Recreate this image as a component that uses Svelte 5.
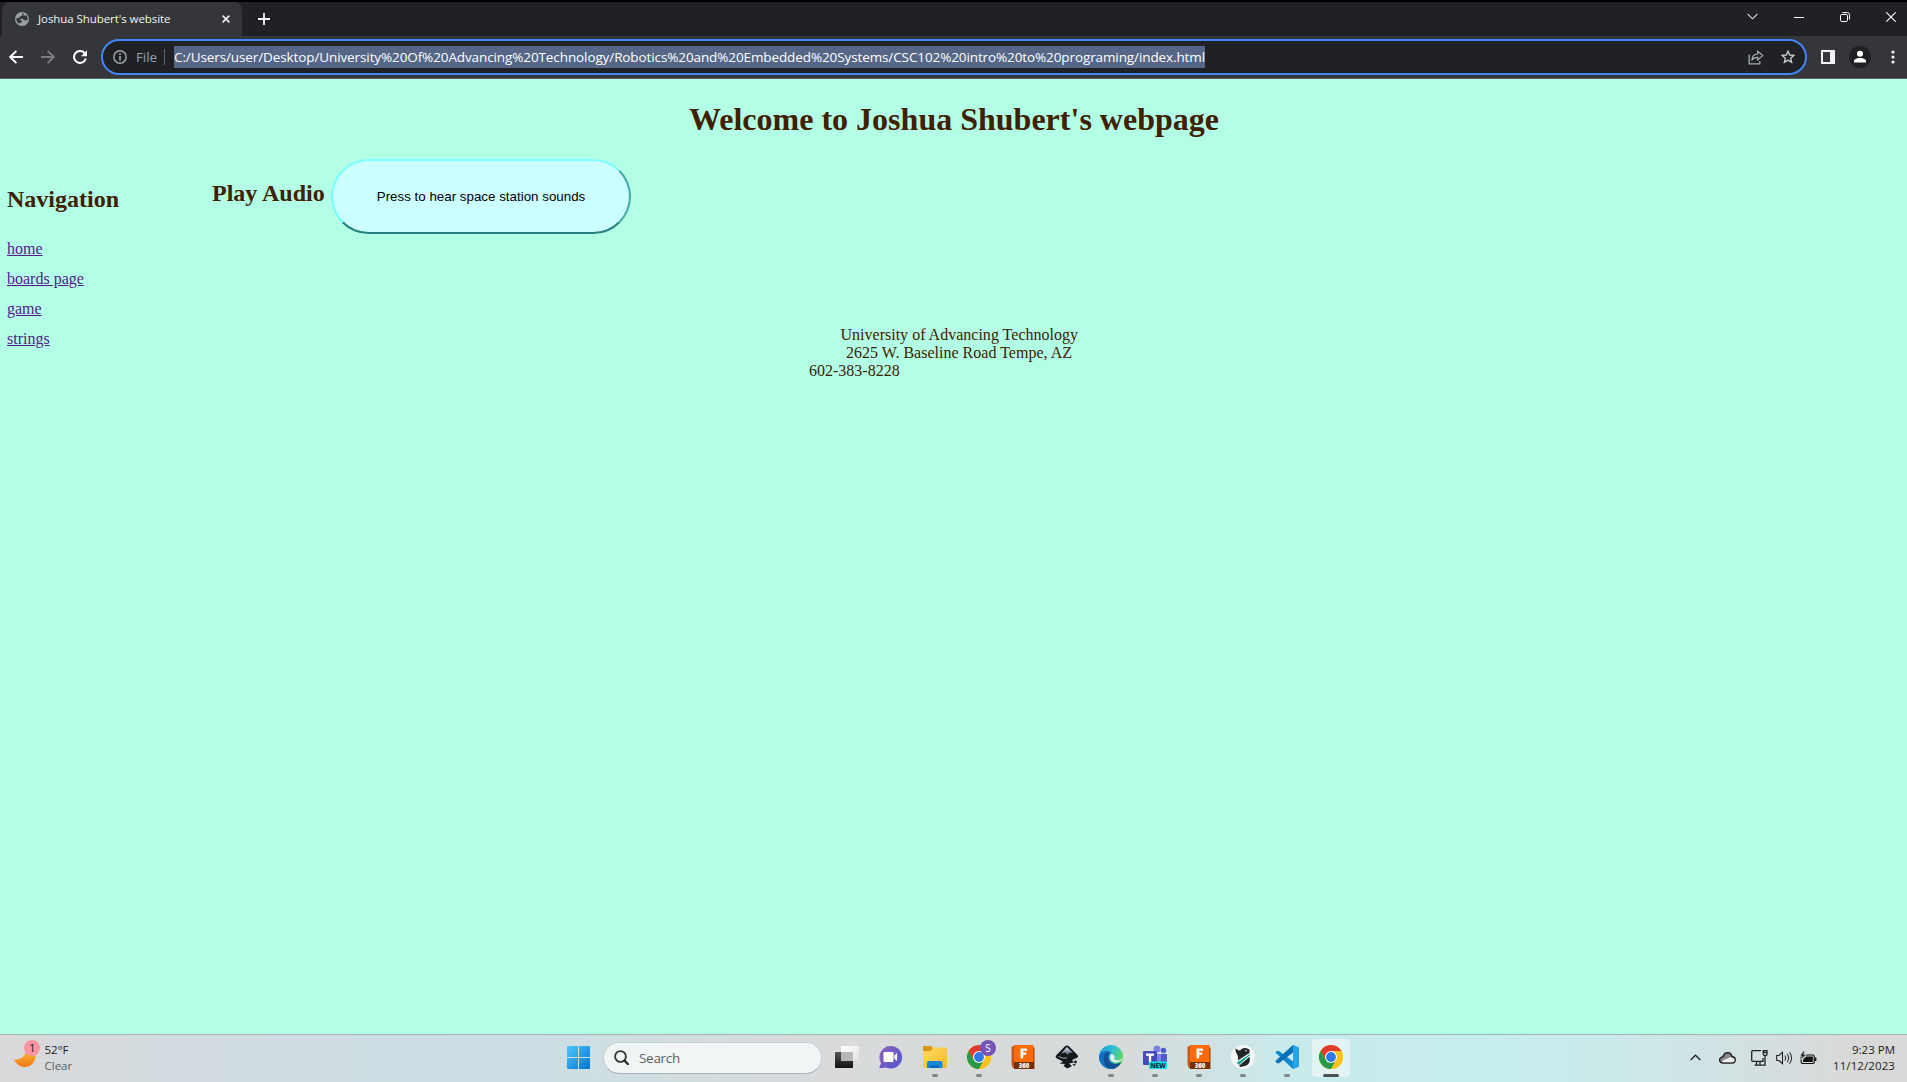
<script>
  const url =
    'C:/Users/user/Desktop/University%20Of%20Advancing%20Technology/Robotics%20and%20Embedded%20Systems/CSC102%20intro%20to%20programing/index.html';
  const links = ['home', 'boards page', 'game', 'strings'];
  const apps = [
    { id: 'view' },
    { id: 'chat' },
    { id: 'files', open: true },
    { id: 'chrome', open: true, badge: 'S' },
    { id: 'fusion' },
    { id: 'inkscape' },
    { id: 'edge', open: true },
    { id: 'teams', open: true },
    { id: 'fusion', open: true },
    { id: 'orca', open: true },
    { id: 'code', open: true },
    { id: 'chrome', open: true, active: true }
  ];

  // Spreads the tracking of a label so that it fills the given width.
  function fit(node, width) {
    const natural = node.getBoundingClientRect().width;
    node.style.letterSpacing = (width - natural) / node.textContent.length + 'px';
  }
</script>

{#snippet chromeLogo()}
  <circle cx="22" cy="23" r="12" fill="#fbc116" />
  <path d="M11.6 17A12 12 0 0 1 32.4 17H22L16.8 26Z" fill="#e33b2e" />
  <path d="M11.6 17A12 12 0 0 0 22 35L27.2 26H16.8Z" fill="#279847" />
  <path d="M22 35A12 12 0 0 0 32.4 17H22L27.2 26Z" fill="#fcc31a" />
  <circle cx="22" cy="23" r="6" fill="#fff" />
  <circle cx="22" cy="23" r="4.9" fill="#2f78e8" />
{/snippet}

<div class="screen">
  <header class="tabs">
    <div class="tab">
      <svg class="globe" width="14" height="14" viewBox="0 0 14 14">
        <circle cx="7" cy="7" r="7" fill="#9aa0a6" />
        <path d="M8.5 1.3C7 1 6.7 2 7.2 2.8 7.6 3.6 6.4 4.2 5.6 4.1 5 4.2 5.2 5.4 4.6 5.6L1.3 6.2C1.1 8.8 2.5 11 4.3 12L4.6 10.6 6.6 10.4C7.6 10 7.2 8.6 6.2 8.3L4.8 7.4 6.6 6.6C8 6.4 8.6 7.4 8.8 8 10 8.6 11 8 12.6 8.2 13 6.2 12.3 4 10.8 2.7L9.8 3.9 8.4 3.4Z" fill="#35363a" />
      </svg>
      <span class="title"><span use:fit={132.5}>Joshua Shubert's website</span></span>
      <svg class="close" width="8" height="8" viewBox="0 0 8 8"><path d="M.6.6 7.4 7.4M7.4.6.6 7.4" stroke="#f1f3f4" stroke-width="1.5" /></svg>
    </div>
    <svg class="plus" width="12" height="12" viewBox="0 0 12 12"><path d="M6 0V12M0 6H12" stroke="#f1f3f4" stroke-width="1.8" /></svg>
    <div class="controls">
      <svg width="11" height="7" viewBox="0 0 11 7"><path d="M.5.8 5.5 5.8 10.5.8" fill="none" stroke="#dfe1e5" stroke-width="1.1" /></svg>
      <svg width="10" height="10" viewBox="0 0 10 10"><path d="M0 5.5H10" stroke="#fff" /></svg>
      <svg width="10" height="10" viewBox="0 0 10 10"><rect x=".5" y="2.5" width="7" height="7" rx="1.3" fill="none" stroke="#fff" /><path d="M2.3.6H7.4Q9.5.6 9.5 2.7V7.5" fill="none" stroke="#fff" /></svg>
      <svg width="10" height="10" viewBox="0 0 10 10"><path d="M.3.3 9.7 9.7M9.7.3.3 9.7" stroke="#fff" stroke-width="1.1" /></svg>
    </div>
  </header>

  <div class="toolbar">
    <svg class="back" width="14" height="14" viewBox="0 0 14 14"><path d="M14 7H1.5M7.4.8 1.2 7 7.4 13.2" fill="none" stroke="#fff" stroke-width="1.9" /></svg>
    <svg class="fwd" width="14" height="14" viewBox="0 0 14 14"><path d="M0 7H12.5M6.6.8 12.8 7 6.6 13.2" fill="none" stroke="#7c7d80" stroke-width="1.9" /></svg>
    <svg class="reload" width="14" height="14" viewBox="0 0 14 14"><path d="M11.8 3.3A6 6 0 1 0 12.8 8.5" fill="none" stroke="#fff" stroke-width="2" /><path d="M14 .2V6.2H8Z" fill="#fff" /></svg>
    <div class="omnibox">
      <svg class="info" width="14" height="14" viewBox="0 0 14 14"><circle cx="7" cy="7" r="6.2" fill="none" stroke="#9aa0a6" stroke-width="1.5" /><path d="M7 6V10.6M7 3.3V4.9" stroke="#9aa0a6" stroke-width="1.7" /></svg>
      <span class="scheme"><span use:fit={21}>File</span></span>
      <i class="rule"></i>
      <span class="url"><span use:fit={1031}>{url}</span></span>
      <svg class="share" width="16" height="15" viewBox="0 0 16 15"><path d="M1.2 4.5V13.8H11.8V11" fill="none" stroke="#a8acb1" stroke-width="1.3" /><path d="M9.7 1.2 14.8 5.6 9.7 10V7.4C7 7.3 5.1 8.1 3.7 10.2 4.1 6.5 6 4.2 9.7 3.8Z" fill="none" stroke="#a8acb1" stroke-width="1.2" /></svg>
      <svg class="star" width="14" height="14" viewBox="0 0 14 14"><path d="M7 1.2 8.7 5 12.9 5.4 9.7 8.2 10.6 12.3 7 10.1 3.4 12.3 4.3 8.2 1.1 5.4 5.3 5Z" fill="none" stroke="#c6c9cd" stroke-width="1.4" /></svg>
    </div>
    <svg class="panel" width="14" height="14" viewBox="0 0 14 14"><path fill="#f1f3f4" fill-rule="evenodd" d="M0 0H14V14H0ZM2 2V12H9V2Z" /></svg>
    <svg class="profile" width="22" height="22" viewBox="0 0 22 22"><circle cx="11" cy="11" r="11" fill="#202124" /><circle cx="11" cy="7.8" r="3" fill="#fff" /><path d="M5 16.5V15.3C5 13 8 12 11 12S17 13 17 15.3V16.5Z" fill="#fff" /></svg>
    <svg class="menu" width="4" height="14" viewBox="0 0 4 14"><g fill="#f1f3f4"><circle cx="2" cy="2" r="1.6" /><circle cx="2" cy="7" r="1.6" /><circle cx="2" cy="12" r="1.6" /></g></svg>
  </div>

  <main>
    <h1><span use:fit={530}>Welcome to Joshua Shubert's webpage</span></h1>
    <div class="content">
      <nav>
        <h2>Navigation</h2>
        {#each links as link}
          <a href="#{link}">{link}</a>
        {/each}
      </nav>
      <section>
        <h2 class="play">Play Audio</h2>
        <button><span use:fit={208.5}>Press to hear space station sounds</span></button>
      </section>
    </div>
    <footer>
      <span class="school"><span use:fit={237.5}>University of Advancing Technology</span></span>
      <span class="street"><span use:fit={226}>2625 W. Baseline Road Tempe, AZ</span></span>
      <span class="phone">602-383-8228</span>
    </footer>
  </main>

  <div class="taskbar">
    <div class="weather">
      <svg width="28" height="32" viewBox="0 0 28 32">
        <defs><linearGradient id="moon" x1="0" y1="0" x2="0" y2="1"><stop offset="0" stop-color="#f9c440" /><stop offset="1" stop-color="#ee7a14" /></linearGradient></defs>
        <path d="M1 20.3C7 21.5 13.5 17.5 13.6 8.5 20 9.5 23 14 22.5 19A11 10.5 0 0 1 1 20.3Z" fill="url(#moon)" />
        <circle cx="19" cy="9" r="8" fill="#fd949f" />
        <text x="19.3" y="13" text-anchor="middle" font-size="11.5" fill="#202020">1</text>
      </svg>
      <div><b>52°F</b><span>Clear</span></div>
    </div>

    <svg class="cell" width="44" height="47" viewBox="0 0 44 47">
      <defs><linearGradient id="win" x1="0" y1="0" x2="1" y2="1"><stop offset="0" stop-color="#4cc8fb" /><stop offset="1" stop-color="#0672d0" /></linearGradient></defs>
      <path d="M12 12Q11 12 11 13V23H22V12ZM23 12V23H34V13Q34 12 33 12ZM11 24V34Q11 35 12 35H22V24ZM23 24V35H33Q34 35 34 34V24Z" fill="url(#win)" />
    </svg>

    <div class="search">
      <svg width="15" height="15" viewBox="0 0 15 15"><circle cx="6.5" cy="6.5" r="5.4" fill="none" stroke="#333" stroke-width="1.8" /><path d="M10.5 10.5 14 14.2" stroke="#222" stroke-width="2.1" stroke-linecap="round" /></svg>
      <span use:fit={41}>Search</span>
    </div>

    {#each apps as app}
      <div class="app" class:active={app.active}>
        <svg width="44" height="47" viewBox="0 0 44 47">
          {#if app.id === 'view'}
            <defs><linearGradient id="dark" x1="0" y1="0" x2="0" y2="1"><stop offset="0" stop-color="#555" /><stop offset="1" stop-color="#111" /></linearGradient><linearGradient id="light" x1="0" y1="0" x2="1" y2="1"><stop offset="0" stop-color="#fff" /><stop offset="1" stop-color="#e2e2e2" /></linearGradient></defs>
            <rect x="10" y="18" width="18" height="16" rx="1" fill="url(#dark)" />
            <rect x="16" y="12" width="18" height="15" rx="1" fill="url(#light)" />
            <path d="M16 18H28V27H16Z" fill="#b8b8b8" />
          {:else if app.id === 'chat'}
            <defs><linearGradient id="chat" x1="0" y1="0" x2="1" y2="1"><stop offset="0" stop-color="#8d62b8" /><stop offset="1" stop-color="#5058d0" /></linearGradient></defs>
            <path d="M22 12A11.3 11.3 0 1 1 17 33.5L11 34.3Q10 34.4 10.4 33.4L12 29A11.3 11.3 0 0 1 22 12Z" fill="url(#chat)" />
            <rect x="14.5" y="18" width="10" height="10" rx="1.2" fill="#fff" />
            <path d="M25.3 21.5 28 19V27L25.3 24.5Z" fill="#fff" />
          {:else if app.id === 'files'}
            <defs><linearGradient id="fold" x1="0" y1="0" x2="1" y2="1"><stop offset="0" stop-color="#ffdb62" /><stop offset="1" stop-color="#f8bb2b" /></linearGradient></defs>
            <path d="M10 13Q10 12 11 12H18L20 14V20H10Z" fill="#d99711" />
            <path d="M10 17H17L20.5 13.5H33Q34 13.5 34 14.5V33Q34 34 33 34H11Q10 34 10 33Z" fill="url(#fold)" />
            <path d="M14 34V29Q14 27 16 27H27.5Q29.5 27 29.5 29V34Z" fill="#1687d9" />
            <path d="M17.5 34V32.5Q17.5 31.5 18.5 31.5H25Q26 31.5 26 32.5V34Z" fill="#0768ac" />
          {:else if app.id === 'chrome'}
            {@render chromeLogo()}
            {#if app.badge}
              <circle cx="31" cy="14" r="8" fill="#7754b8" />
              <text x="31" y="17.7" text-anchor="middle" font-size="10" fill="#fff">{app.badge}</text>
            {/if}
          {:else if app.id === 'fusion'}
            <path d="M10.5 13 14 11V34H12Q10.5 32 10.5 30Z" fill="#c5591d" />
            <path d="M32 13 33.5 14V35H13V29Z" fill="#8c3a0b" />
            <rect x="13" y="11" width="19.5" height="17" fill="#fb6b0a" />
            <rect x="13" y="28" width="20" height="7" fill="#743008" />
            <path d="M19.5 24.3V14.5H26V16.8H22.2V18.6H25.3V20.8H22.2V24.3Z" fill="#fff" />
            <text x="23" y="33.8" text-anchor="middle" font-size="6" font-weight="800" fill="#fff">360</text>
          {:else if app.id === 'inkscape'}
            <defs><linearGradient id="ink" x1="0" y1="0" x2="0" y2="1"><stop offset="0" stop-color="#dce8fa" /><stop offset="1" stop-color="#50586a" /></linearGradient></defs>
            <path d="M20 12.3Q22 10.8 24 12.3L32.5 21Q34 23 31.5 24L27 26 29 28.5 24 29.5 27 32 22.5 34.5 18.5 32 20 30 14.5 29.5 18 27.5 12 24.5Q9.5 23 11.5 21Z" fill="#17181b" />
            <path d="M22 13 28 19 24.5 18.5 23 21 20.5 18.5 16 19.5Z" fill="url(#ink)" />
            <path d="M13.5 22.5Q18 25 22 24" fill="none" stroke="#9da4ae" />
            <circle cx="30.5" cy="28" r="1.4" fill="#17181b" />
            <path d="M27 30.5 31 30 29.5 32Z" fill="#17181b" />
          {:else if app.id === 'edge'}
            <defs><linearGradient id="edgeTop" x1="0" y1="0" x2="1" y2=".5"><stop offset="0" stop-color="#2099e0" /><stop offset=".55" stop-color="#30bfd0" /><stop offset="1" stop-color="#62d75b" /></linearGradient></defs>
            <circle cx="22" cy="23" r="12" fill="url(#edgeTop)" />
            <path d="M10 22C11 17 18 15.5 22.5 18.5 20 19 19 21 19.4 24 20.2 30 27 31.5 32 28.3 29 33.5 25 35 22 35 15 35 9.6 29 10 22Z" fill="#1271c2" />
            <path d="M16 20C12.5 26 16 33.5 22.5 35 27 34.8 30 32.3 32 28.3 27 31.5 20.2 30 19.4 24 19.2 21.5 20 19.3 22 18.4 20 18 17.5 18.5 16 20Z" fill="#134f94" />
            <path d="M22.5 20C19.5 22 21 28 26 28.2 30 28.4 33.5 27 34 23.5 32.5 26.5 27.5 27 25 25.5 26.5 23.5 25.5 20.5 22.5 20Z" fill="#e5eef1" />
          {:else if app.id === 'teams'}
            <circle cx="24" cy="15" r="3.5" fill="#7b83eb" />
            <circle cx="30.5" cy="16.5" r="2.7" fill="#5059c9" />
            <path d="M20 20H30V30Q28 33 24 33T18 28Z" fill="#7b83eb" />
            <path d="M28 20H34V28Q32 31 28 30Z" fill="#5059c9" />
            <rect x="10" y="17" width="14" height="14" rx="1" fill="#444ab8" />
            <path d="M13 19.5H21V21.7H18.2V28.5H15.8V21.7H13Z" fill="#fff" />
            <rect x="16" y="27.5" width="18" height="7.5" rx="1" fill="#10e6ee" />
            <text x="25" y="33.5" text-anchor="middle" font-size="6.5" font-weight="800" fill="#082b38">NEW</text>
          {:else if app.id === 'orca'}
            <circle cx="22" cy="23" r="12" fill="#f5f7f7" />
            <path d="M14.3 14.5 18 16.5Q19.500 16.500 20.500 15 24.500 12.700 28.500 15.500L28.500 19 24.500 21.500 16.800 26.500Q17.800 22 15 18.500Z" fill="#202627" />
            <path d="M29 20.500 17.800 30.500 16.300 28.700Z" fill="#07a08b" stroke="#07a08b" stroke-width=".8" />
            <path d="M28.500 22.700Q30 28.500 25.500 31.500L19.500 33 18 31.800Z" fill="#202627" />
            <circle cx="25" cy="16.700" r=".8" fill="#fff" />
          {:else}
            <path d="M28 11 34 13.7V32.5L28 35 12 20 10.3 18.7 12 16.8 14 17 28 27.5Z" fill="#1088cf" />
            <path d="M28 11V18.5L14 29.2 12 29.2 10.3 27.3 12 25.5Z" fill="#0870b5" />
            <path d="M28 11 34 13.7V32.5L28 35Z" fill="#27a2ec" />
          {/if}
        </svg>
        {#if app.open}<i class="dot"></i>{/if}
      </div>
    {/each}

    <div class="tray">
      <svg class="chev" width="11" height="7" viewBox="0 0 11 7"><path d="M.6 6 5.5 1.2 10.4 6" fill="none" stroke="#222" stroke-width="1.3" /></svg>
      <svg class="cloud" width="17" height="12" viewBox="0 0 17 12"><path d="M4 11C.8 11 0 8.5 1 6.5 1.7 5.2 3 4.8 4 4.7 5 1.5 7.2.8 8.7.8 11 .8 12.5 2.2 13 4.5 15.5 4.8 16.3 6.5 16.2 8 16.2 10 14.8 11 13 11Z" fill="#888" stroke="#222" stroke-width="1.4" /><path d="M4 10.3C2.5 10 4 7.5 7 7.2L11 5.2C13 5 15.6 6.5 15.5 8 15.5 9.5 14.5 10.3 13 10.3Z" fill="#eee" /></svg>
      <svg class="net" width="17" height="16" viewBox="0 0 17 16"><path d="M10 .7H1.7Q.7.7.7 1.7V10.3Q.7 11.3 1.7 11.3H12V8M5.5 11.5V15M9 11.5V15M3.5 15.2H12.5M14 6V15.2H12.5M12.2.7H16V4Q16 5.7 14.1 5.7T12.2 4ZM12.2 2.5H16" fill="none" stroke="#222" stroke-width="1.3" /></svg>
      <svg class="vol" width="17" height="14" viewBox="0 0 17 14"><path d="M.7 4.5H3L6.5 1.3V12.7L3 9.5H.7Z" fill="none" stroke="#222" stroke-width="1.1" /><path d="M8.8 4.5Q10.5 7 8.8 9.5M11.2 2.8Q14 7 11.2 11.2M13.6 1.2Q17.5 7 13.6 12.8" fill="none" stroke="#333" stroke-width="1.1" /></svg>
      <svg class="bat" width="17" height="14" viewBox="0 0 17 14"><rect x="1.2" y="4" width="13" height="8.5" rx="1.6" fill="none" stroke="#111" stroke-width="1.2" /><path d="M6 5.5H12.8V11H3V8.8Z" fill="#111" /><path d="M15 6.5H16.4V10H15Z" fill="#111" /><path d="M3.5 0 0 5H2.2L1.3 9 6 3.5H3.6L5 0Z" fill="#111" stroke="#d5dddd" stroke-width=".7" /></svg>
      <div class="clock"><span use:fit={43}>9:23 PM</span><span use:fit={62}>11/12/2023</span></div>
    </div>
  </div>
</div>

<style>
  :global(body) { margin: 0; overflow: hidden; }
  .screen {
    width: 1907px;
    height: 1082px;
    display: flex;
    flex-direction: column;
    font-family: 'Open Sans', 'Noto Sans', sans-serif;
    background: #b2ffe5;
  }
  svg { display: block; flex: none; }
  span { white-space: nowrap; }

  .tabs {
    flex: none;
    box-sizing: border-box;
    height: 36px;
    border-top: 2px solid #000;
    background: #202124;
    display: flex;
    align-items: center;
  }
  .tab {
    box-sizing: border-box;
    width: 240px;
    height: 34px;
    margin-left: 2px;
    padding: 0 12px 0 13px;
    background: #35363a;
    border-radius: 8px 8px 0 0;
    display: flex;
    align-items: center;
  }
  .title { margin: -2px 0 0 9px; font-size: 11.5px; color: #f1f3f4; flex: 1; }
  .plus { margin-left: 16px; }
  .controls { margin-left: auto; margin-right: 11px; margin-top: -5px; display: flex; align-items: center; gap: 36px; }

  .toolbar {
    flex: none;
    box-sizing: border-box;
    height: 43px;
    background: #35363a;
    border-bottom: 1px solid #5c5e61;
    display: flex;
    align-items: center;
    padding: 0 12px 0 9px;
  }
  .fwd { margin-left: 18px; }
  .reload { margin-left: 18px; }
  .omnibox {
    box-sizing: border-box;
    width: 1706px;
    height: 36px;
    margin-left: 14px;
    border: 2px solid #4285f4;
    border-radius: 18px;
    background: #202124;
    display: flex;
    align-items: center;
    padding: 0 10px;
  }
  .scheme { width: 21px; margin-left: 9px; font-size: 13.5px; color: #9aa0a6; }
  .rule { width: 1px; height: 16px; margin: 0 9px 0 7px; background: #5f6368; }
  .url { width: 1031px; height: 22px; line-height: 22px; background: #556686; color: #fff; font-size: 13.5px; }
  .share { margin-left: auto; margin-right: 17px; }
  .panel { margin-left: 14px; }
  .profile { margin-left: 14px; }
  .menu { margin-left: auto; }

  main { flex: 1; color: #402000; font-family: 'Liberation Serif', serif; font-size: 16px; }
  h1 { margin: 22px 0 0; padding-left: 1px; font-size: 32px; line-height: 37px; text-align: center; }
  .content { display: flex; margin-top: 21px; height: 165px; }
  h2 { margin: 0; font-size: 24px; line-height: 27px; }
  nav { width: 205px; padding: 27px 0 0 7px; box-sizing: border-box; display: flex; flex-direction: column; align-items: flex-start; }
  nav h2 { margin-bottom: 21px; }
  nav a { color: #551a8b; line-height: 30px; }
  section { display: flex; align-items: flex-start; padding-left: 7px; }
  .play { width: 119px; padding-top: 21px; }
  button {
    width: 300px;
    height: 75px;
    padding: 0;
    border-width: 2px;
    border-style: solid;
    border-color: #80ffff #45a8a8 #268080 #70ffff;
    border-radius: 37.5px;
    background: #ccffff;
    color: #000;
    font: 13.33px 'Liberation Sans', sans-serif;
  }
  footer { display: flex; flex-direction: column; margin-top: 2px; line-height: 18px; }
  .school { padding-left: 840.5px; }
  .street { padding-left: 846px; }
  .phone { padding-left: 809px; }

  .taskbar {
    flex: none;
    box-sizing: border-box;
    height: 48px;
    border-top: 1px solid #a5b2b1;
    background: linear-gradient(90deg, #d9d9da 0, #d2dbe0 180px, #cbdfe5 500px, #d0dee1 640px, #d8dadb 820px, #d7dada 1120px, #c8eaeb 1290px, #c6eeee 1500px, #cee5e6 1680px, #dad9da 1850px);
    display: flex;
    align-items: flex-start;
    color: #1b1b1b;
  }
  .weather { box-sizing: border-box; width: 556px; padding: 4px 0 0 13px; display: flex; font-size: 11.5px; }
  .weather div { display: flex; flex-direction: column; line-height: 16px; padding: 3px 0 0 3.5px; }
  .weather b { font-weight: 400; }
  .weather span { color: #5b5e60; }
  .cell, .app svg { margin-top: -1px; }
  .search {
    box-sizing: border-box;
    width: 219px;
    height: 32px;
    margin: 7px 3px 0 3px;
    padding: 0 0 1px 10px;
    border: 1px solid #c7cfd1;
    border-bottom-color: #a9b3b5;
    border-radius: 16px;
    background: #f1f5f6;
    display: flex;
    align-items: center;
    gap: 10px;
    font-size: 13.5px;
    color: #5c5f61;
  }
  .app { width: 44px; height: 47px; display: grid; grid-template: 47px / 44px; justify-items: center; }
  .app svg, .dot { grid-area: 1 / 1; }
  .app svg { z-index: 1; }
  .dot { align-self: end; width: 6px; height: 3px; margin-bottom: 5px; border-radius: 2px; background: #808586; z-index: 2; }
  .active { width: 38px; height: 38px; grid-template: 38px / 38px; margin: 4px 3px 0; border-radius: 4px; background: #e3f3f3; }
  .active svg { margin: -5px -3px 0; }
  .active .dot { width: 16px; margin-bottom: 0; background: #4c5051; }
  .tray { flex: 1; height: 45px; display: flex; align-items: center; justify-content: flex-end; padding-right: 12px; }
  .cloud { margin-left: 18px; }
  .net { margin-left: 15px; }
  .vol { margin-left: 8px; }
  .bat { margin-left: 7px; }
  .clock { width: 78px; display: flex; flex-direction: column; align-items: flex-end; font-size: 11.5px; line-height: 16px; }
</style>
